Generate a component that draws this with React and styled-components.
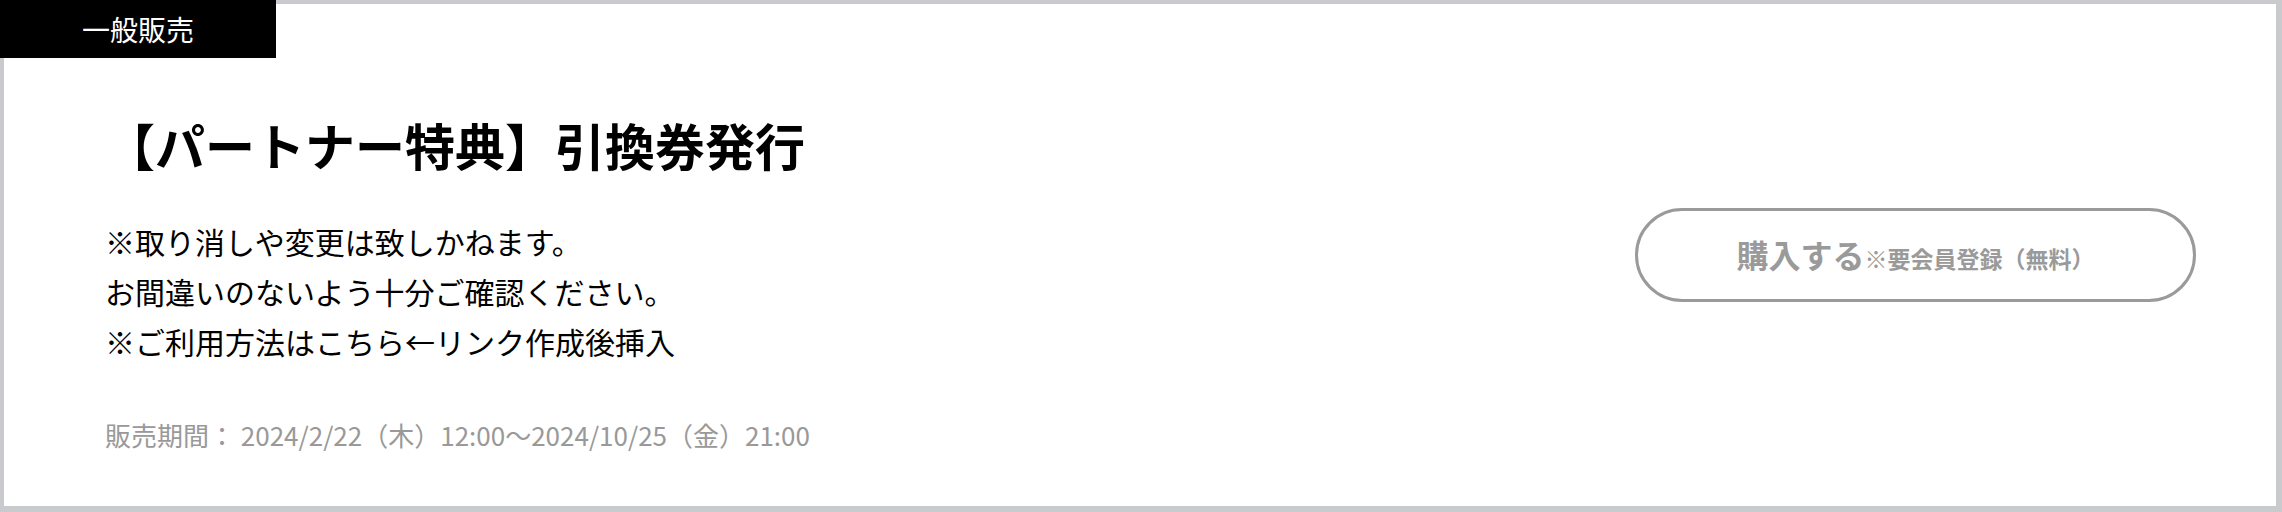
import React from 'react';
import styled, { createGlobalStyle } from 'styled-components';

const GlobalStyle = createGlobalStyle`
  html, body {
    margin: 0;
    padding: 0;
    background: #fff;
  }
  body {
    font-family: "Noto Sans CJK JP", "Noto Sans", sans-serif;
    color: #000;
  }
`;

const TicketCard = styled.section`
  position: relative;
  box-sizing: border-box;
  display: flex;
  align-items: stretch;
  height: 512px;
  border-style: solid;
  border-color: #c9cacd;
  border-width: 4px 6px 6px 4px;
  background: #fff;
`;

const SaleBadge = styled.div`
  position: absolute;
  top: -4px;
  left: -4px;
  width: 276px;
  height: 58px;
  display: flex;
  align-items: center;
  justify-content: center;
  background: #000;
  color: #fff;
  font-size: 28px;
  line-height: 1;
`;

const InfoColumn = styled.div`
  flex: 1;
  padding: 105px 0 0 101px;
`;

const TicketTitle = styled.h2`
  margin: 0;
  font-size: 50px;
  font-weight: 700;
  line-height: 70px;
  letter-spacing: 0;
`;

const NoteList = styled.div`
  margin-top: 37px;
  font-size: 30px;
  line-height: 50px;
`;

const NoteLine = styled.p`
  margin: 0;
`;

const SalePeriod = styled.p`
  margin: 49px 0 0;
  font-size: 26px;
  line-height: 39px;
  color: #999;
`;

const ActionColumn = styled.div`
  display: flex;
  align-items: center;
  padding-right: 80px;
`;

const BuyButton = styled.button`
  box-sizing: border-box;
  width: 561px;
  height: 94px;
  display: flex;
  align-items: baseline;
  justify-content: center;
  padding: 0;
  border: 3px solid #9a9a9a;
  border-radius: 47px;
  background: #fff;
  color: #9a9a9a;
  font-family: inherit;
  font-weight: 700;
  line-height: 86px;
  cursor: pointer;
`;

const BuyLabel = styled.span`
  font-size: 32px;
`;

const BuyNote = styled.span`
  font-size: 23px;
`;

const notes = [
  '※取り消しや変更は致しかねます。',
  'お間違いのないよう十分ご確認ください。',
  '※ご利用方法はこちら←リンク作成後挿入',
];

export default function App() {
  return (
    <>
      <GlobalStyle />
      <TicketCard>
        <SaleBadge>一般販売</SaleBadge>
        <InfoColumn>
          <TicketTitle>【パートナー特典】引換券発行</TicketTitle>
          <NoteList>
            {notes.map((n) => (
              <NoteLine key={n}>{n}</NoteLine>
            ))}
          </NoteList>
          <SalePeriod>販売期間： 2024/2/22（木）12:00〜2024/10/25（金）21:00</SalePeriod>
        </InfoColumn>
        <ActionColumn>
          <BuyButton type="button">
            <BuyLabel>購入する</BuyLabel>
            <BuyNote>※要会員登録（無料）</BuyNote>
          </BuyButton>
        </ActionColumn>
      </TicketCard>
    </>
  );
}
